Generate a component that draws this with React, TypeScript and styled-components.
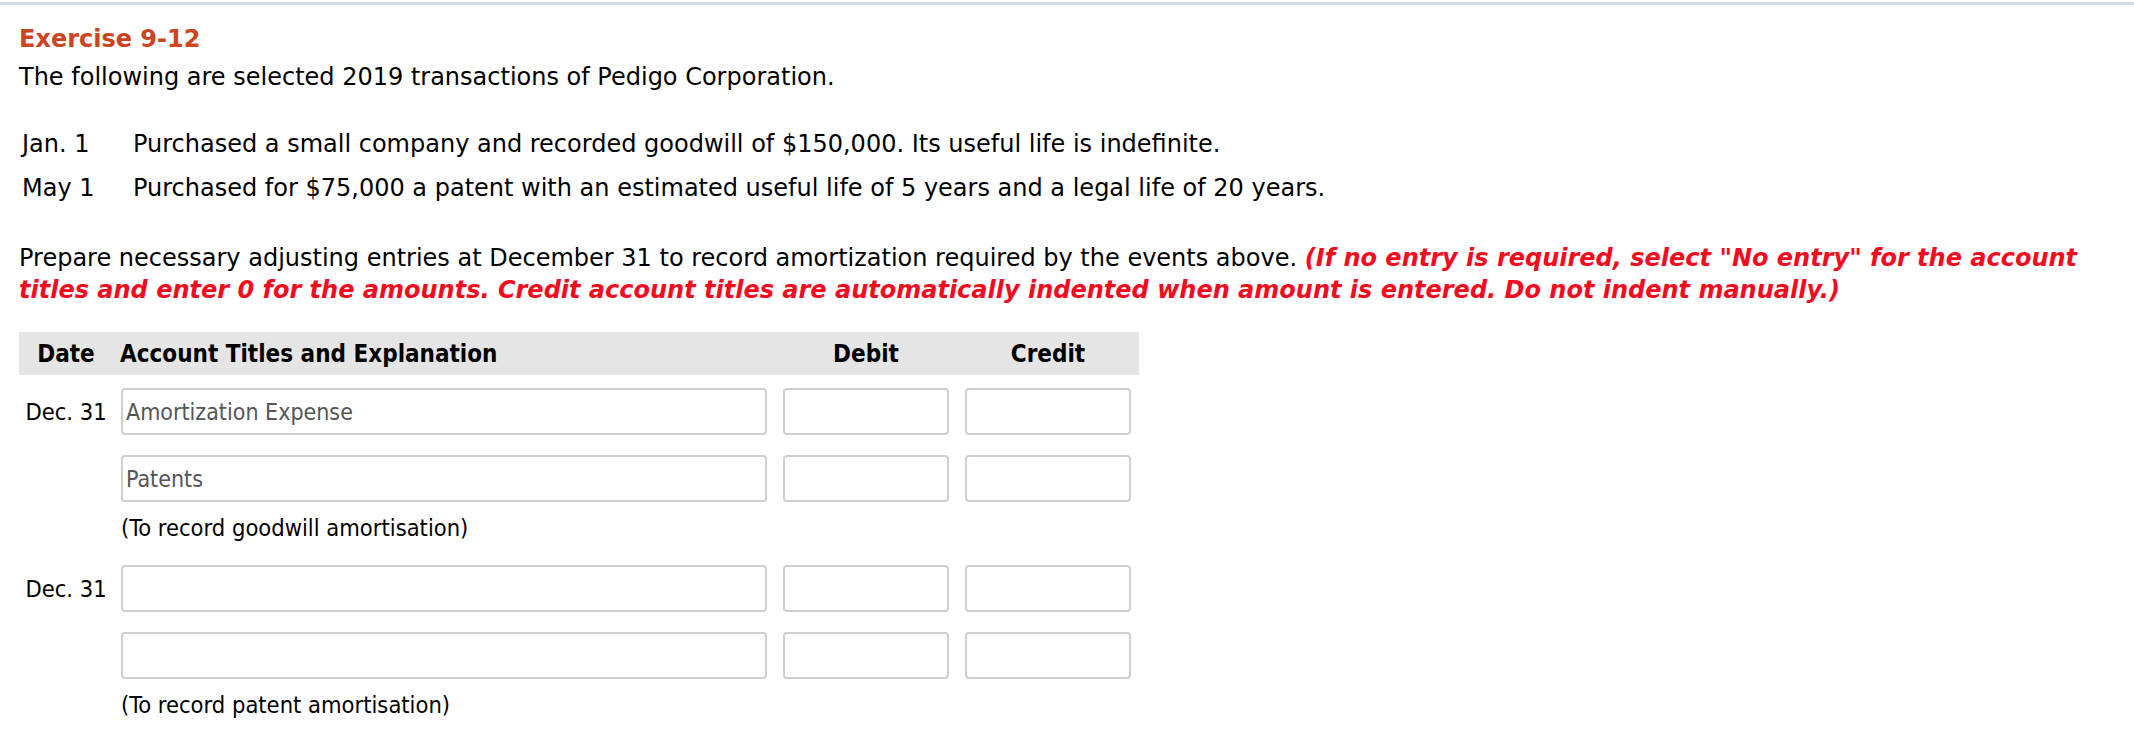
import React from 'react';
import styled, { createGlobalStyle } from 'styled-components';

const sans = `"DejaVu Sans", Verdana, sans-serif`;
const narrow = `"DejaVu Sans Condensed", "DejaVu Sans", Tahoma, sans-serif`;
const columns = '94px 662px 182px 182px';

const GlobalStyle = createGlobalStyle`
  body {
    margin: 0;
    background: #fff;
    color: #000;
    font-family: ${sans};
  }
`;

const Page = styled.div`
  margin-top: 2px;
  border-top: 3px solid #d3dae3;
  padding: 0 19px;
`;

const Title = styled.h2`
  margin: 20px 0 0;
  font-size: 24px;
  line-height: 29px;
  font-weight: bold;
  color: #cc4420;
`;

const Intro = styled.p`
  margin: 9px 0 0;
  font-size: 24px;
  line-height: 29px;
`;

const Events = styled.div`
  margin-top: 30px;
`;

const EventRow = styled.div`
  display: grid;
  grid-template-columns: 111px 1fr;
  align-items: center;
  height: 44px;
  padding-left: 3px;
  font-size: 24px;
  line-height: 29px;
`;

const Instructions = styled.p`
  margin: 32px 0 0;
  font-size: 24px;
  line-height: 32px;
`;

const Warning = styled.span`
  color: #f50a1e;
  font-weight: bold;
  font-style: italic;
`;

const Journal = styled.div`
  margin-top: 26px;
  width: 1120px;
  font-family: ${narrow};
  font-size: 23.5px;
`;

const HeaderRow = styled.div`
  display: grid;
  grid-template-columns: ${columns};
  align-items: center;
  height: 43px;
  background: #e5e5e5;
  font-size: 24px;
  font-weight: bold;
`;

const HeadCell = styled.div<{ $align?: string }>`
  padding: 0 7px;
  text-align: ${(p) => p.$align || 'left'};
`;

const EntryRow = styled.div<{ $top?: number }>`
  display: grid;
  grid-template-columns: ${columns};
  align-items: center;
  padding: ${(p) => p.$top ?? 10}px 0 10px;
`;

const DateCell = styled.div`
  text-align: center;
`;

const FieldCell = styled.div`
  padding: 0 8px;
`;

const Field = styled.input`
  box-sizing: border-box;
  display: block;
  width: 100%;
  height: 47px;
  padding: 0 3px;
  border: 2px solid #cfcfcf;
  border-radius: 4px;
  background: #fff;
  font-family: ${narrow};
  font-size: 23px;
  color: #555;
  outline: none;
`;

const Note = styled.div<{ $bottom: number }>`
  padding: 3px 8px ${(p) => p.$bottom}px 102px;
  line-height: 27px;
`;

type Line = {
  date?: string;
  account: string;
};

type Entry = {
  lines: Line[];
  note: string;
};

const events = [
  { date: 'Jan. 1', text: 'Purchased a small company and recorded goodwill of $150,000. Its useful life is indefinite.' },
  { date: 'May 1', text: 'Purchased for $75,000 a patent with an estimated useful life of 5 years and a legal life of 20 years.' },
];

const entries: Entry[] = [
  {
    lines: [
      { date: 'Dec. 31', account: 'Amortization Expense' },
      { account: 'Patents' },
    ],
    note: '(To record goodwill amortisation)',
  },
  {
    lines: [
      { date: 'Dec. 31', account: '' },
      { account: '' },
    ],
    note: '(To record patent amortisation)',
  },
];

export default function App() {
  return (
    <Page>
      <GlobalStyle />
      <Title>Exercise 9-12</Title>
      <Intro>The following are selected 2019 transactions of Pedigo Corporation.</Intro>
      <Events>
        {events.map((ev) => (
          <EventRow key={ev.date}>
            <div>{ev.date}</div>
            <div>{ev.text}</div>
          </EventRow>
        ))}
      </Events>
      <Instructions>
        Prepare necessary adjusting entries at December 31 to record amortization required by the events above.{' '}
        <Warning>
          (If no entry is required, select "No entry" for the account titles and enter 0 for the amounts. Credit
          account titles are automatically indented when amount is entered. Do not indent manually.)
        </Warning>
      </Instructions>
      <Journal>
        <HeaderRow>
          <HeadCell $align="center">Date</HeadCell>
          <HeadCell>Account Titles and Explanation</HeadCell>
          <HeadCell $align="center">Debit</HeadCell>
          <HeadCell $align="center">Credit</HeadCell>
        </HeaderRow>
        {entries.map((entry, i) => (
          <div key={i}>
            {entry.lines.map((line, j) => (
              <EntryRow key={j} $top={i === 0 && j === 0 ? 13 : 10}>
                <DateCell>{line.date}</DateCell>
                <FieldCell>
                  <Field readOnly value={line.account} />
                </FieldCell>
                <FieldCell>
                  <Field readOnly value="" />
                </FieldCell>
                <FieldCell>
                  <Field readOnly value="" />
                </FieldCell>
              </EntryRow>
            ))}
            <Note $bottom={i === 0 ? 13 : 10}>{entry.note}</Note>
          </div>
        ))}
      </Journal>
    </Page>
  );
}
